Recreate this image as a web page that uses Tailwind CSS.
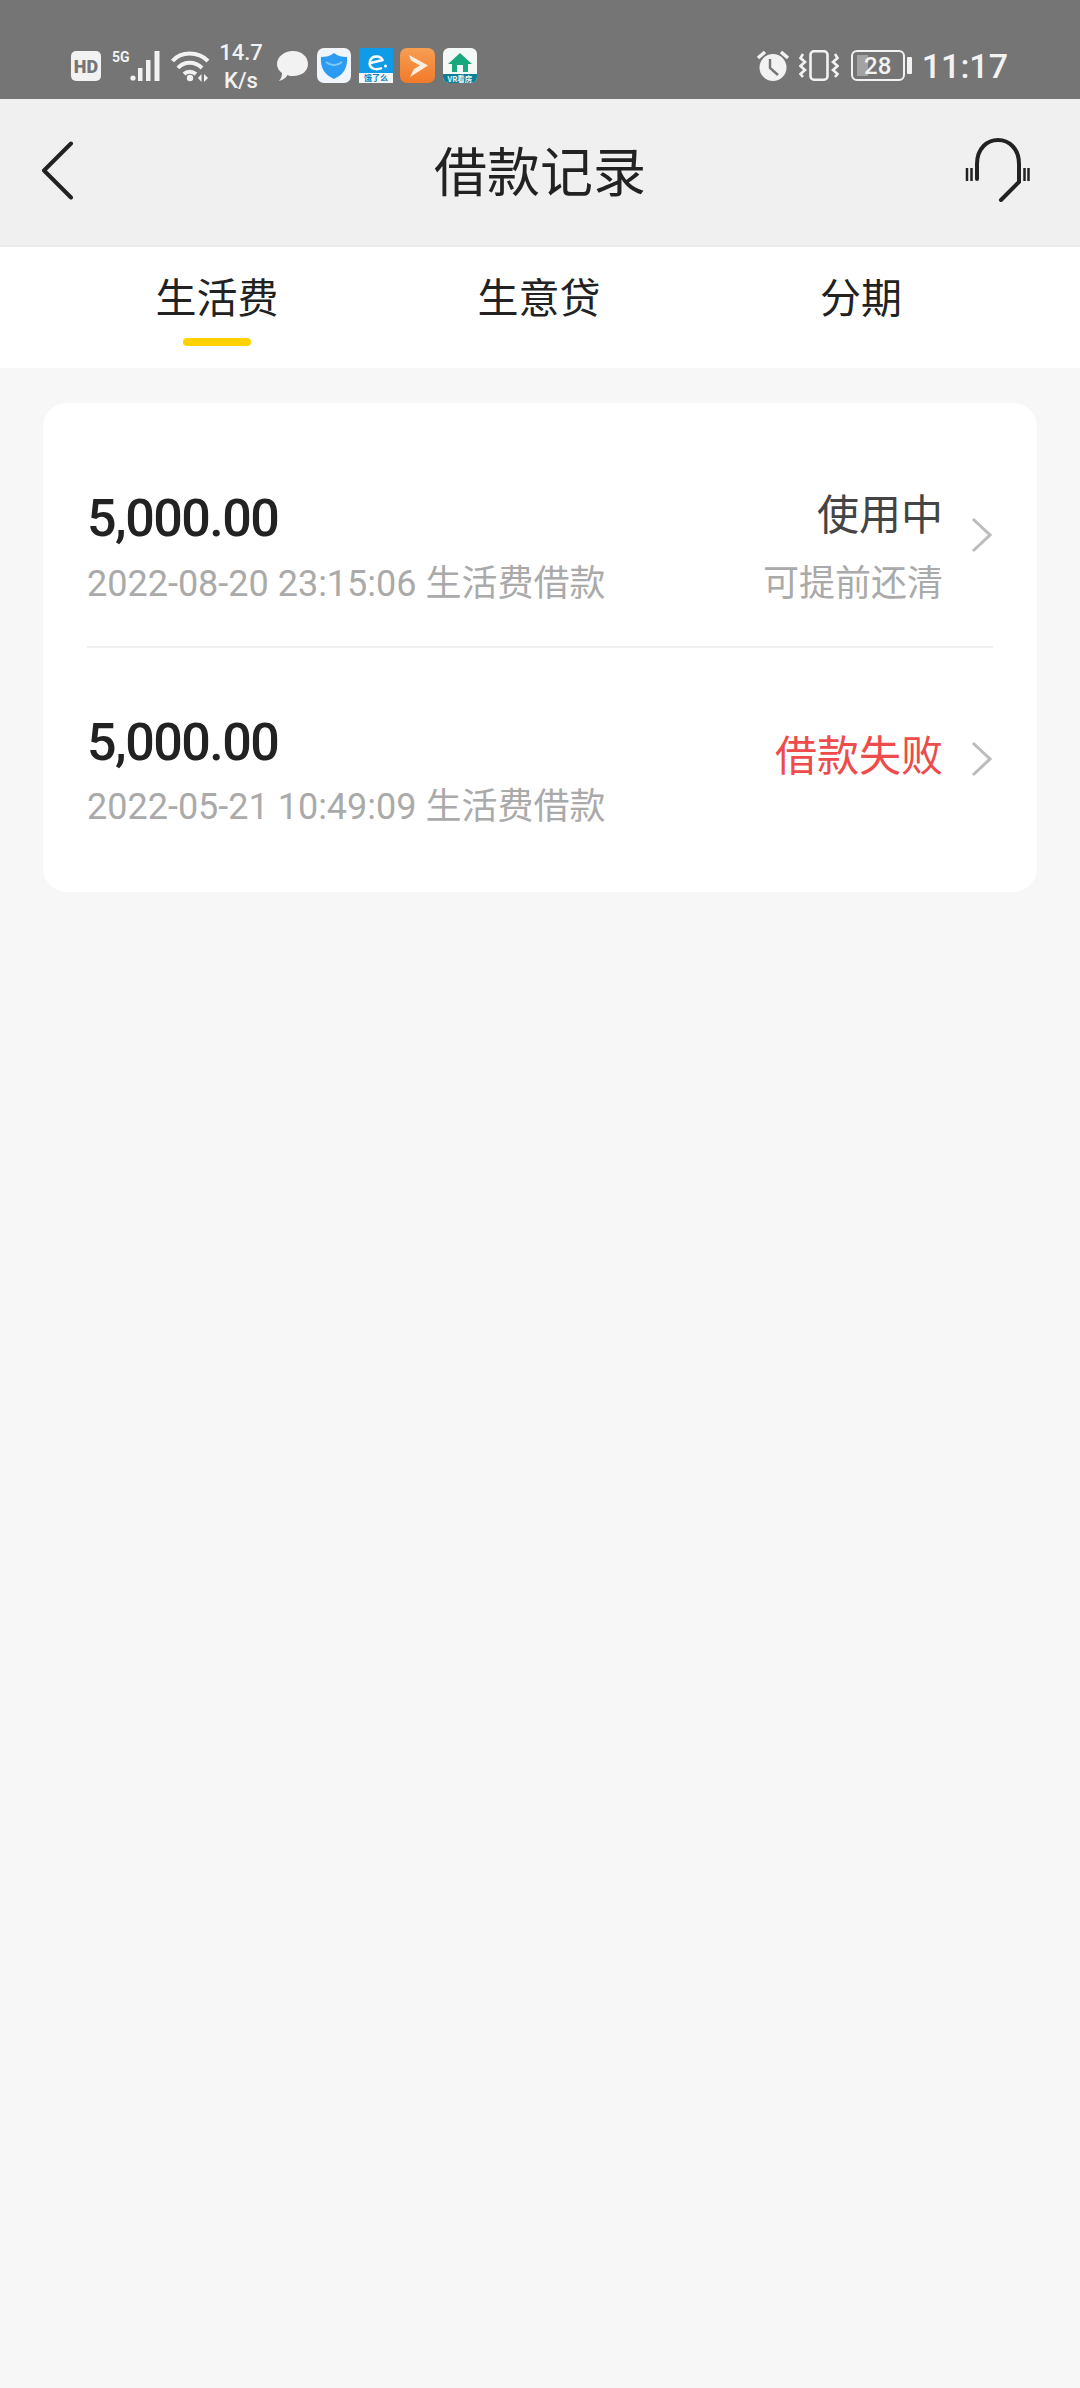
<!DOCTYPE html>
<html lang="zh">
<head>
    <meta charset="UTF-8">
    <meta name="viewport" content="width=device-width, initial-scale=1.0">
    <title>借款记录</title>
    <script src="https://cdn.jsdelivr.net/npm/@tailwindcss/browser@4"></script>
</head>
<body class="bg-[#f7f7f7] font-['Roboto','Noto_Sans_CJK_SC',sans-serif]">
<div class="w-[1080px] h-[2388px] overflow-hidden flex flex-col">
    <!-- status bar -->
    <div class="h-[99px] bg-[#757575] flex items-center justify-between pl-[71px] pr-[72px] pt-[32px] text-[#f2f2f2] shrink-0">
        <div class="flex items-center">
            <svg width="30" height="30" viewBox="0 0 30 30" class="mr-[11px]"><rect width="30" height="30" rx="5" fill="#f2f2f2"/><text x="15" y="21.5" text-anchor="middle" font-family="Roboto" font-weight="900" font-size="18" fill="#757575">HD</text></svg>
            <svg width="49" height="32" viewBox="0 0 49 32" class="mr-[10px]">
                <text x="0" y="12" font-family="Roboto" font-weight="700" font-size="14" fill="#f2f2f2">5G</text>
                <circle cx="21" cy="28" r="2.6" fill="#f2f2f2"/>
                <rect x="26" y="18" width="4.5" height="13" fill="#f2f2f2"/>
                <rect x="34" y="10" width="4.5" height="21" fill="#f2f2f2"/>
                <rect x="42.5" y="1" width="5" height="30" fill="#f2f2f2"/>
            </svg>
            <svg width="39" height="32" viewBox="0 0 39 32" class="mr-[6px]" fill="none" stroke="#f2f2f2" stroke-width="4">
                <path d="M1.5 11 C10 1 27 1 37 11"/>
                <path d="M7 18 C13 11 24 11 31 18"/>
                <path d="M13 24 C16 21 21 21 25 24"/>
                <circle cx="19" cy="28" r="3.2" fill="#f2f2f2" stroke="none"/>
                <path d="M27 28 L30.5 24 V32 Z M33 24 L37 28 L33 32 Z" fill="#f2f2f2" stroke="none"/>
            </svg>
            <div class="w-[50px] text-[22px] leading-[28px] text-center font-medium mr-[11px] mt-[2px]">14.7<br>K/s</div>
            <svg width="31" height="30" viewBox="0 0 31 30" class="mr-[9px]"><path d="M16 0 C25 0 31 6 31 13 C31 20 25 25 16 25 C14 25 12 25 10.500 24 C9 27 6 29 2 30 C4 28 5 25 5 22 C2 20 0 17 0 13 C0 6 7 0 16 0 Z" fill="#f2f2f2"/></svg>
            <svg width="34" height="35" viewBox="0 0 34 35" class="mr-[8px]">
                <rect width="34" height="35" rx="7" fill="#f0f5fc"/>
                <path d="M17 5 C21 8 25 9 30 9 C31 20 26 27 17 31 C8 27 3 20 4 9 C9 9 13 8 17 5 Z" fill="#2b9cf2"/>
                <path d="M9 14 C14 18 20 18 25 14" fill="none" stroke="#7cc9fa" stroke-width="2"/>
            </svg>
            <svg width="34" height="35" viewBox="0 0 34 35" class="mr-[7px]">
                <rect width="34" height="35" fill="#0f9be8"/>
                <rect y="25" width="34" height="10" fill="#f4f8fb"/>
                <path d="M24 13 C22 7 13 7 11 13 C9 20 16 23 23 20 M11.500 15 L24 12" fill="none" stroke="#fff" stroke-width="2.4"/>
                <circle cx="26.500" cy="18" r="1.5" fill="#fff"/>
                <text x="17" y="33" text-anchor="middle" font-family="Noto Sans CJK SC" font-size="8" font-weight="700" fill="#0f7fc2">饿了么</text>
            </svg>
            <svg width="35" height="35" viewBox="0 0 35 35" class="mr-[8px]">
                <defs><linearGradient id="o" x1="0" y1="0" x2="0" y2="1"><stop offset="0" stop-color="#f79e52"/><stop offset="1" stop-color="#f27a2a"/></linearGradient></defs>
                <rect width="35" height="35" rx="7" fill="url(#o)"/>
                <path d="M9 7 L28 17.500 L10 29 L14 21 L20 17.500 L11 12.500 Z" fill="#fdeee2"/>
            </svg>
            <svg width="34" height="35" viewBox="0 0 34 35">
                <rect width="34" height="35" rx="6" fill="#f4f8f6"/>
                <path d="M17 5 L29 16 H25 V24 H9 V16 H5 Z" fill="#19a77e"/>
                <rect x="14" y="17" width="6" height="7" fill="#f4f8f6"/>
                <path d="M0 26 H34 V29 A6 6 0 0 1 28 35 H6 A6 6 0 0 1 0 29 Z" fill="#0f7f95"/>
                <text x="17" y="33.500" text-anchor="middle" font-family="Noto Sans CJK SC" font-size="7.500" font-weight="700" fill="#e8f6f6">VR看房</text>
            </svg>
        </div>
        <div class="flex items-center">
            <svg width="32" height="31" viewBox="0 0 32 31" class="mr-[10px]">
                <circle cx="16" cy="17.500" r="13.500" fill="#f2f2f2"/>
                <path d="M13 9 V18 L21 25" fill="none" stroke="#757575" stroke-width="2.400"/>
                <path d="M1 8 L8 2 M31 8 L24 2" stroke="#f2f2f2" stroke-width="3.400"/>
            </svg>
            <svg width="40" height="31" viewBox="0 0 40 31" fill="none" stroke="#f2f2f2" stroke-width="2.600" class="mr-[12px]">
                <rect x="11.500" y="1.300" width="17" height="28.400" rx="3.500"/>
                <path d="M4 4 L1.500 8 L6 12 L1.500 16 L6 20 L1.500 24 L4 27"/>
                <path d="M36 4 L38.500 8 L34 12 L38.500 16 L34 20 L38.500 24 L36 27"/>
            </svg>
            <div class="relative w-[54px] h-[31px] border-[2.5px] border-[#f2f2f2] rounded-[6px] flex items-center justify-center text-[24px] font-medium leading-none">
                <div class="absolute left-[4px] top-[3px] bottom-[3px] w-[11px] bg-[#a3a3a3]"></div>
                <span class="relative">28</span>
            </div>
            <div class="w-[5px] h-[17px] bg-[#f2f2f2] rounded-[1px] ml-[2px] mr-[10px]"></div>
            <div class="text-[34px] leading-none font-medium">11:17</div>
        </div>
    </div>
    <!-- header -->
    <div class="h-[146px] bg-[#f0f0f0] flex items-center justify-between pl-[41px] pr-[50px] shrink-0 relative">
        <svg width="33" height="59" viewBox="0 0 33 59" fill="none" stroke="#222" stroke-width="4" stroke-linecap="round" stroke-linejoin="round" class="mt-[-4px]"><path d="M30 2.500 L3 29.500 L30 56.500"/></svg>
        <div class="text-[53px] text-[#222] leading-none absolute left-0 right-0 text-center top-[49px]">借款记录</div>
        <svg width="66" height="64" viewBox="0 0 66 64" fill="none" stroke="#222" stroke-width="4" stroke-linecap="round" class="mt-[-4px]">
            <path d="M13 41 V26 C13 -6 55 -6 55 26 V44 L37 62"/>
            <path d="M3 30 V43 M7.500 30 V43 M60.500 30 V43 M64.500 30 V43" stroke-width="2.500" stroke-linecap="butt"/>
        </svg>
    </div>
    <!-- tabs -->
    <div class="h-[123px] bg-white border-t-[2px] border-[#ebebeb] grid grid-cols-3 pl-[56px] pr-[58px] text-[41px] text-[#222] shrink-0">
        <div class="flex flex-col items-center pt-[27px]">
            <span class="leading-[50px]">生活费</span>
            <div class="w-[68px] h-[8px] bg-[#ffd200] rounded-full mt-[14px]"></div>
        </div>
        <div class="flex flex-col items-center pt-[27px]"><span class="leading-[50px]">生意贷</span></div>
        <div class="flex flex-col items-center pt-[27px]"><span class="leading-[50px]">分期</span></div>
    </div>
    <!-- list -->
    <div class="mx-[43px] mt-[35px] bg-white rounded-[24px] h-[489px] px-[44px] flex flex-col">
        <div class="pt-[86px] pb-[39px] border-b-[2px] border-[#f0f0f0] flex items-start justify-between">
            <div>
                <div class="text-[52px] font-medium text-[#222] leading-[60px] tracking-[-1.5px]">5,000.00</div>
                <div class="text-[36px] text-[#aaaaaa] leading-[46px] mt-[12px]">2022-08-20 23:15:06 生活费借款</div>
            </div>
            <div class="flex items-center">
                <div class="text-right">
                    <div class="text-[42px] text-[#444] leading-[50px] mt-[2px]">使用中</div>
                    <div class="text-[36px] text-[#aaaaaa] leading-[46px] mt-[20px]">可提前还清</div>
                </div>
                <svg width="22" height="36" viewBox="0 0 22 36" fill="none" stroke="#bbb" stroke-width="3" class="ml-[28px] mt-[-26px]"><path d="M2 2 L19 18 L2 34"/></svg>
            </div>
        </div>
        <div class="pt-[65px] flex items-start justify-between">
            <div>
                <div class="text-[52px] font-medium text-[#222] leading-[60px] tracking-[-1.5px]">5,000.00</div>
                <div class="text-[36px] text-[#aaaaaa] leading-[46px] mt-[11px]">2022-05-21 10:49:09 生活费借款</div>
            </div>
            <div class="flex items-center mt-[19px]">
                <div class="text-[42px] text-[#ee4b4b] leading-[50px]">借款失败</div>
                <svg width="22" height="36" viewBox="0 0 22 36" fill="none" stroke="#bbb" stroke-width="3" class="ml-[28px] mt-[3px]"><path d="M2 2 L19 18 L2 34"/></svg>
            </div>
        </div>
    </div>
</div>
</body>
</html>
